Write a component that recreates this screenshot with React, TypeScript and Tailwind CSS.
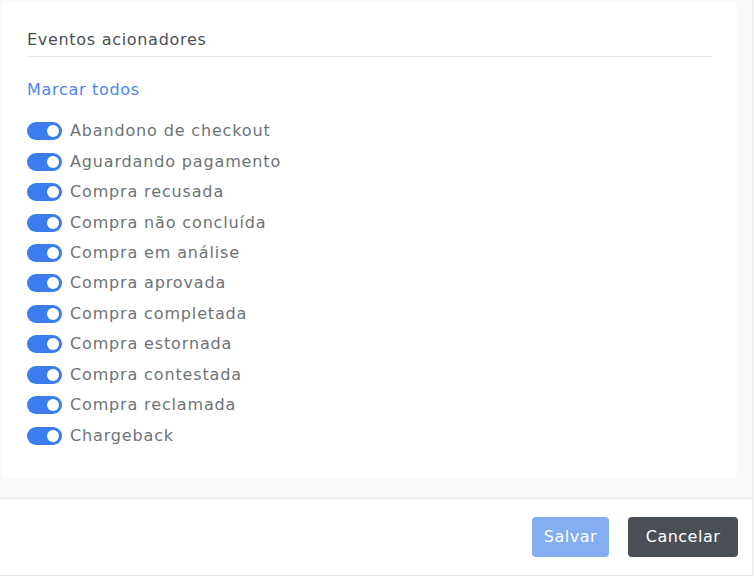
import React from "react";

const items = [
  "Abandono de checkout",
  "Aguardando pagamento",
  "Compra recusada",
  "Compra não concluída",
  "Compra em análise",
  "Compra aprovada",
  "Compra completada",
  "Compra estornada",
  "Compra contestada",
  "Compra reclamada",
  "Chargeback",
];

function Toggle() {
  return (
    <div className="w-[35px] h-[18px] rounded-full bg-[#3b7ded] flex items-center justify-end pr-[3px] shrink-0">
      <div className="w-[12px] h-[12px] rounded-full bg-white" />
    </div>
  );
}

export default function App() {
  return (
    <div className="w-[754px] h-[583px] bg-white" style={{ fontFamily: '"DejaVu Sans", sans-serif' }}>
      <div className="w-[753px] border-r border-[#e9ecef]">
        <div className="bg-[#f8f9fa] pt-[2px] pl-[2px] pr-[15px] pb-[20px]">
          <div className="bg-white rounded-[4px] h-[476px] px-[25px] pt-[27px]">
            <div className="text-[16px] tracking-[0.7px] leading-[22px] text-[#4a4f55] pb-[5px] border-b border-[#e6e8eb]">
              Eventos acionadores
            </div>
            <div className="mt-[22px] text-[16px] tracking-[0.7px] leading-[22px] text-[#4a86f0]">Marcar todos</div>
            <div className="mt-[15px] flex flex-col">
              {items.map((t) => (
                <div key={t} className="flex items-center gap-[8px] h-[30.45px]">
                  <Toggle />
                  <span className="text-[16px] tracking-[0.85px] text-[#6e7378]">{t}</span>
                </div>
              ))}
            </div>
          </div>
        </div>
        <div className="border-t border-[#e3ebf3] border-b border-b-[#e6e8eb] h-[78px] flex items-center justify-end pr-[14px] gap-[19px] bg-white">
          <button className="w-[77px] h-[40px] rounded-[4px] bg-[#85adf1] text-white text-[16px] tracking-[0.5px]">Salvar</button>
          <button className="w-[110px] h-[40px] rounded-[4px] bg-[#4a4f56] text-white text-[16px] tracking-[0.5px]">Cancelar</button>
        </div>
      </div>
    </div>
  );
}
